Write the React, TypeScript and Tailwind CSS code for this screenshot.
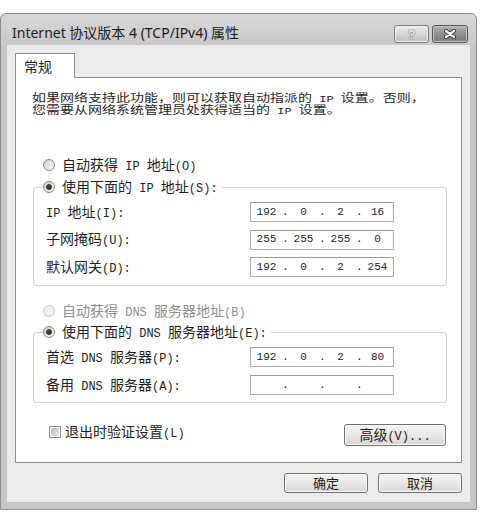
import { Fragment } from "react";

const latin = /^[\x20-\x7e]+$/;

// CJK text in Noto Sans CJK, ascii runs in a mono face like the SimSun half-width glyphs
function Txt({ s }: { s: string }) {
  return (
    <>
      {s.split(/([\x20-\x7e]+)/).map((p, i) =>
        latin.test(p) ? (
          <span key={i} className="whitespace-pre font-['Liberation_Mono',monospace] text-[12px]">
            {p}
          </span>
        ) : (
          <Fragment key={i}>{p}</Fragment>
        )
      )}
    </>
  );
}

function Radio({ on, disabled }: { on?: boolean; disabled?: boolean }) {
  if (disabled) {
    return (
      <span className="flex h-[12px] w-[12px] shrink-0 items-center justify-center rounded-full border border-[#c6c6c6] bg-[#eeeeee]" />
    );
  }
  return (
    <span className="flex h-[12px] w-[12px] shrink-0 items-center justify-center rounded-full border border-[#858585] bg-gradient-to-br from-[#cfcfcf] to-[#f7f7f7]">
      {on && <span className="h-[6px] w-[6px] rounded-full border border-[#2a2a2a] bg-gradient-to-br from-[#5a5a5a] to-[#1e1e1e]" />}
    </span>
  );
}

function IpBox({ parts }: { parts?: string[] }) {
  const segs = parts ?? ["", "", "", ""];
  return (
    <div className="flex h-5 w-[144px] items-center border border-[#acacac] border-t-[#9a9a9a] bg-white font-['Liberation_Mono',monospace] text-[11px] leading-none text-[#222]">
      {segs.map((p, i) => (
        <Fragment key={i}>
          {i > 0 && <span className="w-[6px] text-center">.</span>}
          <span className="flex-1 text-center">{p}</span>
        </Fragment>
      ))}
    </div>
  );
}

function Row({ label, parts }: { label: string; parts?: string[] }) {
  return (
    <div className="flex h-5 items-center pl-[12px]">
      <span className="w-[204px] leading-[16px]">
        <Txt s={label} />
      </span>
      <IpBox parts={parts} />
    </div>
  );
}

function Btn({ children, w }: { children: React.ReactNode; w: string }) {
  return (
    <button
      className={`flex items-center justify-center rounded-[3px] border border-[#707070] bg-gradient-to-b from-[#f3f3f3] via-[#e9e9e9] to-[#d5d5d5] shadow-[inset_0_0_0_1px_#fbfbfb] text-[#1a1a1a] ${w}`}
    >
      {children}
    </button>
  );
}

export default function App() {
  return (
    <div className="min-h-[516px] bg-white pt-[13px] font-['Noto_Sans_CJK_SC',sans-serif] text-[14px] text-[#1f1f1f]">
      <div className="w-[477px] rounded-t-[6px] border border-[#8c8c8c] bg-[#c6c6c6] pb-[7px]">
        {/* title bar */}
        <div className="flex h-[31px] items-start justify-between rounded-t-[6px] bg-gradient-to-b from-[#d9d9d9] to-[#c8c8c8] pl-[11px] pr-[8px] pt-[11px]">
          <span className="font-['Noto_Sans','Noto_Sans_CJK_SC',sans-serif] text-[14px] leading-[16px] text-[#1b1b1b]">
            Internet 协议版本 4 (TCP/IPv4) 属性
          </span>
          <div className="flex gap-[3px]">
            <div className="flex h-[18px] w-[35px] items-center justify-center rounded-[3px] border border-[#7a7a7a] bg-gradient-to-b from-[#ececec] via-[#d6d6d6] to-[#bdbdbd] shadow-[inset_0_0_0_1px_#f2f2f2]">
              <span className="font-['Liberation_Sans',sans-serif] text-[13px] font-bold leading-none text-[#f4f4f4] [text-shadow:0_0_1px_#444,0_0_1px_#444]">?</span>
            </div>
            <div className="flex h-[18px] w-[36px] items-center justify-center rounded-[3px] border border-[#555] bg-gradient-to-b from-[#b4b4b4] via-[#909090] to-[#7a7a7a] shadow-[inset_0_0_0_1px_#c4c4c4]">
              <svg width="14" height="10" viewBox="0 0 14 10">
                <path d="M3 2 L11 8 M11 2 L3 8" stroke="#3a3a3a" strokeWidth="4.2" strokeLinecap="round" />
                <path d="M3 2 L11 8 M11 2 L3 8" stroke="#fff" strokeWidth="2.2" strokeLinecap="round" />
              </svg>
            </div>
          </div>
        </div>

        {/* client area */}
        <div className="mx-[6px] bg-[#ebebeb] px-[8px] pb-[9px] pt-[8px]">
          <div className="relative z-10 -mb-px flex h-[25px] w-[60px] items-center border border-b-0 border-[#8c8c8c] bg-white pl-[8px] leading-[16px]">
            常规
          </div>
          <div className="border border-[#8c8c8c] bg-white pb-[16px] pt-[14px]">
            {/* the two intro lines are set tight, as in the dialog */}
            <div className="h-[22px] pl-[16px]">
              <div className="origin-top scale-y-[0.8]">
                <div className="h-[14px] whitespace-nowrap leading-[14px]">
                  <Txt s="如果网络支持此功能，则可以获取自动指派的 IP 设置。否则，" />
                </div>
                <div className="h-[14px] whitespace-nowrap leading-[14px]">
                  <Txt s="您需要从网络系统管理员处获得适当的 IP 设置。" />
                </div>
              </div>
            </div>

            <div className="mt-[43px] flex h-4 items-center gap-[7px] pl-[27px] leading-[16px]">
              <Radio />
              <span>
                <Txt s="自动获得 IP 地址(O)" />
              </span>
            </div>

            <fieldset className="ml-[17px] mr-[14px] mt-[6px] flex flex-col gap-[7.5px] rounded-[3px] border border-[#d3d3d3] pb-[8px] pt-[7px]">
              <legend className="ml-[9px] pr-[4px]">
                <span className="flex h-4 items-center gap-[7px] leading-[16px]">
                  <Radio on />
                  <span>
                    <Txt s="使用下面的 IP 地址(S):" />
                  </span>
                </span>
              </legend>
              <Row label="IP 地址(I):" parts={["192", "0", "2", "16"]} />
              <Row label="子网掩码(U):" parts={["255", "255", "255", "0"]} />
              <Row label="默认网关(D):" parts={["192", "0", "2", "254"]} />
            </fieldset>

            <div className="mt-[17px] flex h-4 items-center gap-[7px] pl-[27px] leading-[16px] text-[#8e8e8e]">
              <Radio disabled />
              <span>
                <Txt s="自动获得 DNS 服务器地址(B)" />
              </span>
            </div>

            <fieldset className="ml-[17px] mr-[14px] mt-[5px] flex flex-col gap-[8px] rounded-[3px] border border-[#d3d3d3] pb-[7px] pt-[7px]">
              <legend className="ml-[9px] pr-[4px]">
                <span className="flex h-4 items-center gap-[7px] leading-[16px]">
                  <Radio on />
                  <span>
                    <Txt s="使用下面的 DNS 服务器地址(E):" />
                  </span>
                </span>
              </legend>
              <Row label="首选 DNS 服务器(P):" parts={["192", "0", "2", "80"]} />
              <Row label="备用 DNS 服务器(A):" />
            </fieldset>

            <div className="ml-[33px] mr-[15px] mt-[21px] flex items-start justify-between">
              <label className="flex h-4 items-center gap-[4px] leading-[16px]">
                <span className="flex h-[12px] w-[12px] items-center justify-center border border-[#8a8a8a] bg-white">
                  <span className="h-[8px] w-[8px] bg-gradient-to-br from-[#bdbdbd] to-[#e6e6e6]" />
                </span>
                <span>
                  <Txt s="退出时验证设置(L)" />
                </span>
              </label>
              <Btn w="h-[22px] w-[102px]">
                <span className="leading-[16px]">
                  <Txt s="高级(V)..." />
                </span>
              </Btn>
            </div>
          </div>

          <div className="mt-[10px] flex justify-end gap-[10px]">
            <Btn w="h-5 w-[84px]">
              <span className="text-[13px] leading-[16px]">确定</span>
            </Btn>
            <Btn w="h-5 w-[84px]">
              <span className="text-[13px] leading-[16px]">取消</span>
            </Btn>
          </div>
        </div>
      </div>
    </div>
  );
}
